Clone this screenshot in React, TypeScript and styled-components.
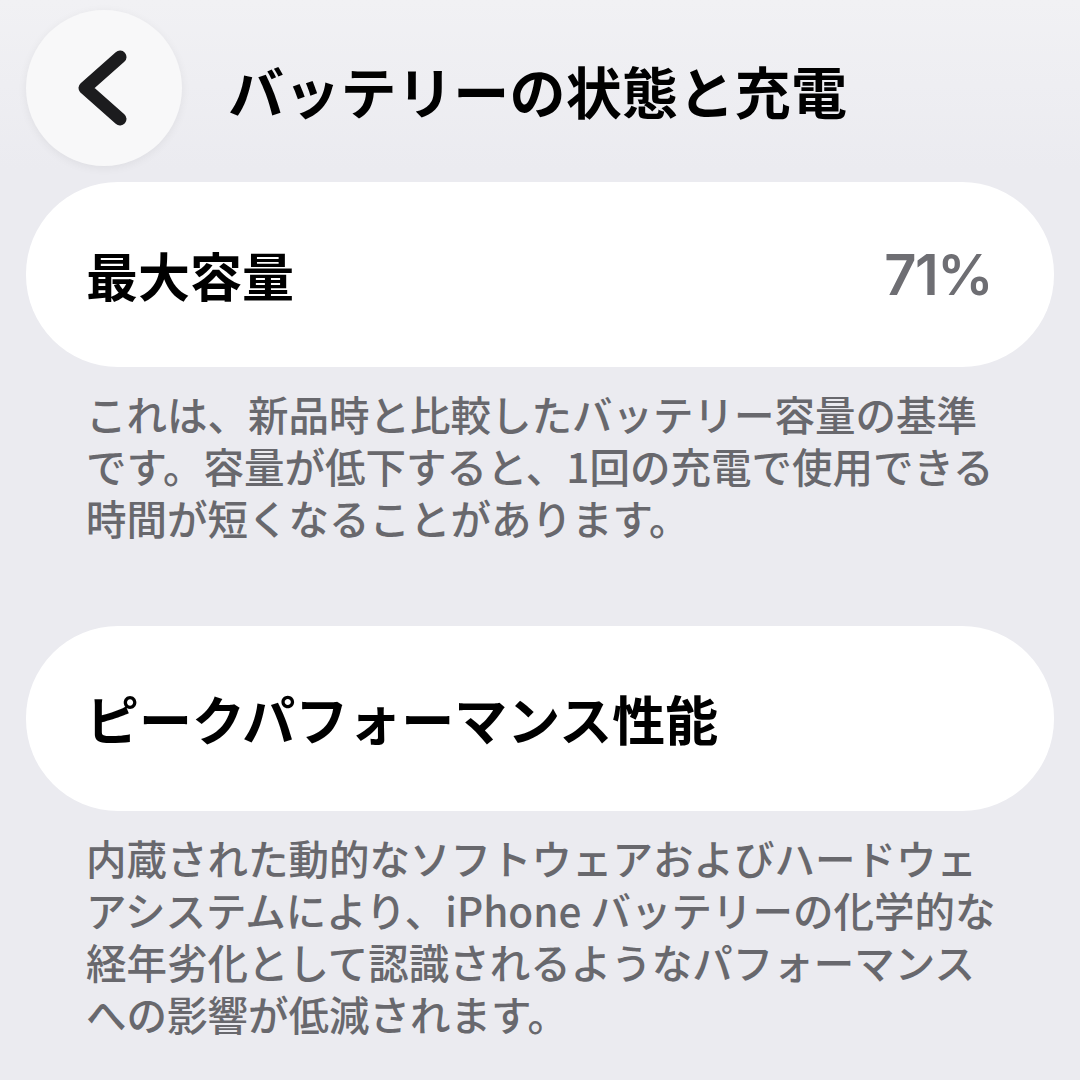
import React from "react";
import styled, { createGlobalStyle } from "styled-components";

const Global = createGlobalStyle`
  html, body { margin: 0; padding: 0; background: #ebebf0; }
  body { font-family: "Noto Sans CJK JP", "Noto Sans", sans-serif; -webkit-font-smoothing: antialiased; }
`;

const Page = styled.div`
  width: 1080px;
  height: 1080px;
  overflow: hidden;
  box-sizing: border-box;
  padding: 10px 26px 0;
  background: linear-gradient(180deg, #f1f1f4 0px, #ebebf0 170px, #ebebf0 100%);
`;

const Header = styled.header`
  display: flex;
  align-items: center;
  height: 156px;
  gap: 46px;
`;

const BackButton = styled.button`
  width: 156px;
  height: 156px;
  border-radius: 50%;
  border: none;
  padding: 0;
  background: #f8f8f9;
  box-shadow: 0 2px 10px rgba(0, 0, 0, 0.06);
  display: flex;
  align-items: center;
  justify-content: center;
  flex-shrink: 0;
`;

const Title = styled.h1`
  margin: 0;
  font-size: 56px;
  font-weight: 700;
  color: #000;
  letter-spacing: 0.3px;
  line-height: 1;
  transform: translateY(2px);
`;

const Card = styled.div<{ $top: number }>`
  margin-top: ${(p) => p.$top}px;
  height: 185px;
  border-radius: 92px;
  background: #ffffff;
  display: flex;
  align-items: center;
  justify-content: space-between;
  padding: 0 60px;
  box-sizing: border-box;
`;

const CardLabel = styled.span<{ $size: number }>`
  font-size: ${(p) => p.$size}px;
  font-weight: 700;
  color: #000;
  line-height: 1;
  white-space: nowrap;
`;

const CardValue = styled.span`
  font-family: Inter, Roboto, sans-serif;
  font-size: 56px;
  font-weight: 600;
  color: #6e6e73;
  letter-spacing: -1.5px;
  line-height: 1;
  margin-right: 2px;
`;

const Footnote = styled.p`
  margin: 0;
  padding: 21px 60px 0;
  font-size: 40.5px;
  font-weight: 500;
  line-height: 52px;
  color: #68686d;
  white-space: nowrap;
`;

const Line = styled.span`
  display: block;
`;

const Chevron = () => (
  <svg width="60" height="80" viewBox="0 0 60 80">
    <path
      d="M46 9 L11 40 L46 71"
      fill="none"
      stroke="#1c1c1e"
      strokeWidth="13"
      strokeLinecap="round"
      strokeLinejoin="round"
    />
  </svg>
);

export default function App() {
  return (
    <>
      <Global />
      <Page>
        <Header>
          <BackButton aria-label="戻る">
            <Chevron />
          </BackButton>
          <Title>バッテリーの状態と充電</Title>
        </Header>

        <Card $top={16}>
          <CardLabel $size={52}>最大容量</CardLabel>
          <CardValue>71%</CardValue>
        </Card>
        <Footnote>
          <Line>これは、新品時と比較したバッテリー容量の基準</Line>
          <Line>です。容量が低下すると、1回の充電で使用できる</Line>
          <Line>時間が短くなることがあります。</Line>
        </Footnote>

        <Card $top={82}>
          <CardLabel $size={53}>ピークパフォーマンス性能</CardLabel>
        </Card>
        <Footnote>
          <Line>内蔵された動的なソフトウェアおよびハードウェ</Line>
          <Line>アシステムにより、iPhone バッテリーの化学的な</Line>
          <Line>経年劣化として認識されるようなパフォーマンス</Line>
          <Line>への影響が低減されます。</Line>
        </Footnote>
      </Page>
    </>
  );
}
